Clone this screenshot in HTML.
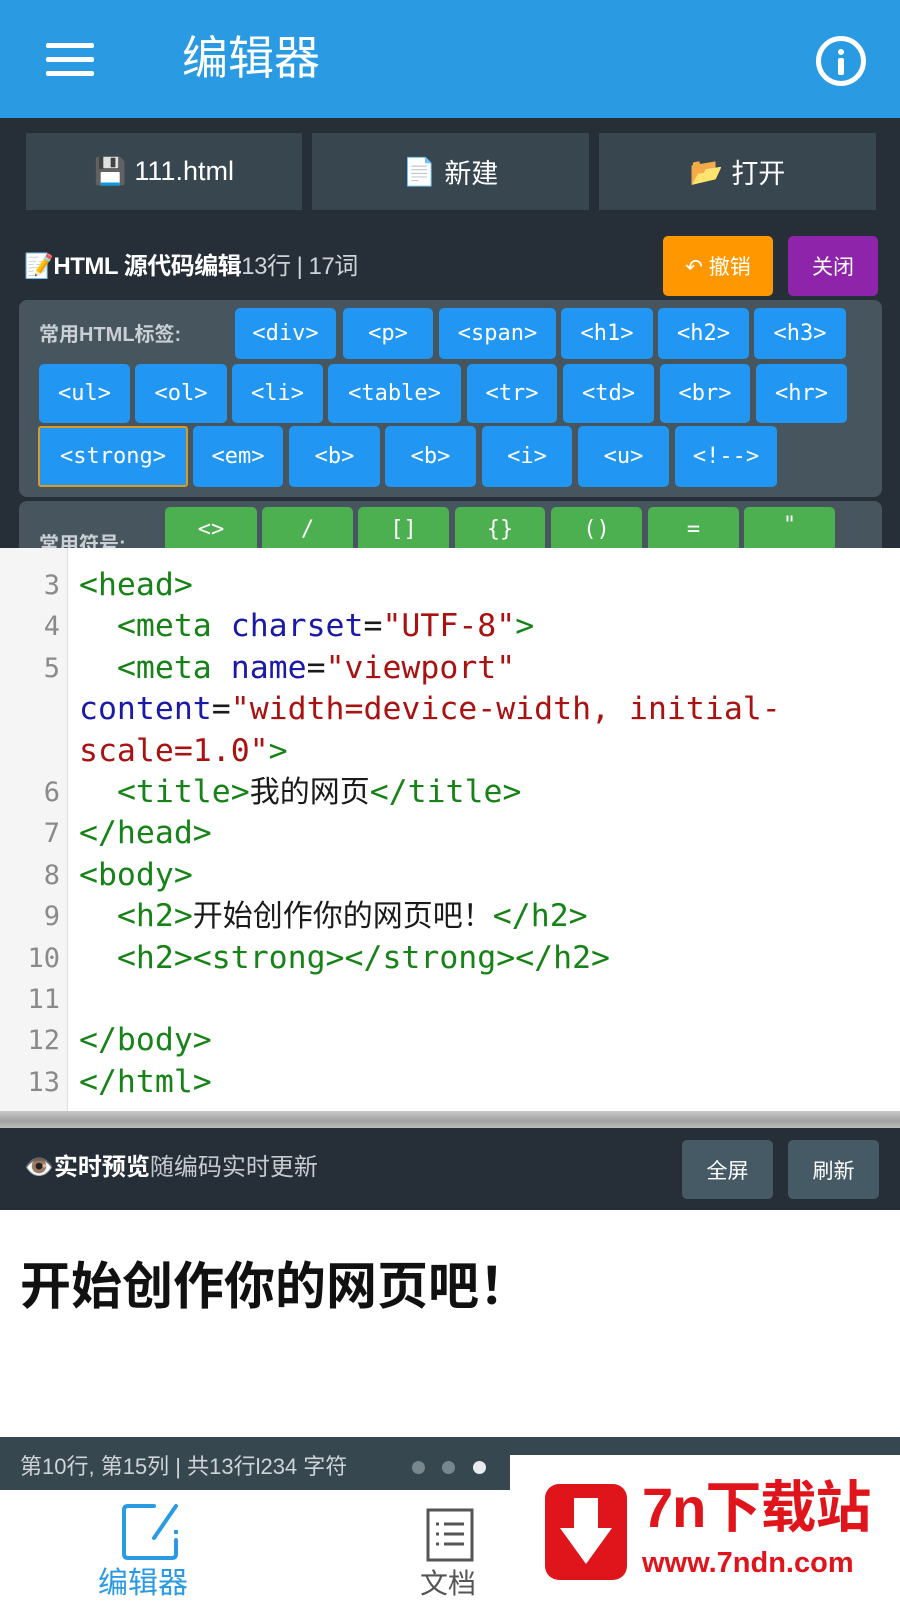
<!DOCTYPE html>
<html><head><meta charset="utf-8"><style>
*{margin:0;padding:0;box-sizing:border-box}
body{width:900px;height:1600px;overflow:hidden;position:relative;background:#fff;font-family:"Liberation Sans","Noto Sans CJK SC",sans-serif}
.a{position:absolute}
.hdr{left:0;top:0;width:900px;height:118px;background:#2a9be2}
.dark{left:0;top:118px;width:900px;height:430px;background:#262e37}
.tb{top:133px;height:77px;background:#37464f;color:#fff;font-size:27px;display:flex;align-items:center;justify-content:center;gap:8px}
.panel{background:#47555e;border-radius:8px}
.btn{position:absolute;border-radius:5px;color:#fff;font-family:"DejaVu Sans Mono",monospace;font-size:22px;display:flex;align-items:center;justify-content:center}
.bl{background:#2196f3}
.gr{background:#4caf50}
.lbl{color:#c9cfd3;font-size:20px;font-weight:bold}
.code{font-family:"DejaVu Sans Mono","Noto Sans CJK SC",monospace;font-size:31.5px;line-height:41.4px;white-space:pre;color:#1a1a1a}
.t{color:#178217}.n{color:#1a1aa6}.s{color:#a11}
.ln{position:absolute;right:8px;color:#8a8a8a;font-family:"DejaVu Sans Mono",monospace;font-size:27px}
</style></head><body>
<div class="a hdr"></div>
<div class="a" style="left:46px;top:43px;width:48px;height:5px;background:#fff;border-radius:2px"></div>
<div class="a" style="left:46px;top:57px;width:48px;height:5px;background:#fff;border-radius:2px"></div>
<div class="a" style="left:46px;top:71px;width:48px;height:5px;background:#fff;border-radius:2px"></div>
<div class="a" style="left:182px;top:30px;color:#fff;font-size:46px;line-height:56px">编辑器</div>
<div class="a" style="left:816px;top:36px;width:50px;height:50px;border:5px solid #fff;border-radius:50%"></div>
<div class="a" style="left:838px;top:49px;width:6px;height:6px;background:#fff;border-radius:50%"></div>
<div class="a" style="left:838px;top:58px;width:6px;height:17px;background:#fff;border-radius:2px"></div>

<div class="a dark"></div>
<div class="a tb" style="left:26px;width:276px"><span style="font-size:26px">💾</span>111.html</div>
<div class="a tb" style="left:312px;width:277px"><span>📄</span>新建</div>
<div class="a tb" style="left:599px;width:277px"><span>📂</span>打开</div>

<div class="a" style="left:24px;top:249px;font-size:24px;color:#fff;font-weight:bold;line-height:36px;letter-spacing:-0.5px">📝HTML 源代码编辑<span style="font-weight:normal;color:#d0d4d8">13行 | 17词</span></div>
<div class="a" style="left:663px;top:236px;width:110px;height:60px;background:#ff9800;border-radius:5px;color:#fff;font-size:21px;display:flex;align-items:center;justify-content:center">↶ 撤销</div>
<div class="a" style="left:788px;top:236px;width:90px;height:60px;background:#8e24aa;border-radius:5px;color:#fff;font-size:21px;display:flex;align-items:center;justify-content:center">关闭</div>

<div class="a panel" style="left:19px;top:300px;width:863px;height:197px"></div>
<div class="a lbl" style="left:39px;top:318px">常用HTML标签:</div>
<div class="btn bl" style="left:235px;top:308px;width:101px;height:51px">&lt;div&gt;</div>
<div class="btn bl" style="left:343px;top:308px;width:90px;height:51px">&lt;p&gt;</div>
<div class="btn bl" style="left:439px;top:308px;width:117px;height:51px">&lt;span&gt;</div>
<div class="btn bl" style="left:561px;top:308px;width:92px;height:51px">&lt;h1&gt;</div>
<div class="btn bl" style="left:658px;top:308px;width:91px;height:51px">&lt;h2&gt;</div>
<div class="btn bl" style="left:754px;top:308px;width:92px;height:51px">&lt;h3&gt;</div>

<div class="btn bl" style="left:39px;top:364px;width:91px;height:59px">&lt;ul&gt;</div>
<div class="btn bl" style="left:135px;top:364px;width:92px;height:59px">&lt;ol&gt;</div>
<div class="btn bl" style="left:232px;top:364px;width:91px;height:59px">&lt;li&gt;</div>
<div class="btn bl" style="left:328px;top:364px;width:133px;height:59px">&lt;table&gt;</div>
<div class="btn bl" style="left:467px;top:364px;width:90px;height:59px">&lt;tr&gt;</div>
<div class="btn bl" style="left:563px;top:364px;width:91px;height:59px">&lt;td&gt;</div>
<div class="btn bl" style="left:660px;top:364px;width:90px;height:59px">&lt;br&gt;</div>
<div class="btn bl" style="left:756px;top:364px;width:91px;height:59px">&lt;hr&gt;</div>

<div class="btn bl" style="left:38px;top:426px;width:150px;height:61px;border:2px solid #d99a2a;border-radius:3px">&lt;strong&gt;</div>
<div class="btn bl" style="left:193px;top:426px;width:90px;height:61px">&lt;em&gt;</div>
<div class="btn bl" style="left:289px;top:426px;width:91px;height:61px">&lt;b&gt;</div>
<div class="btn bl" style="left:385px;top:426px;width:91px;height:61px">&lt;b&gt;</div>
<div class="btn bl" style="left:482px;top:426px;width:90px;height:61px">&lt;i&gt;</div>
<div class="btn bl" style="left:578px;top:426px;width:91px;height:61px">&lt;u&gt;</div>
<div class="btn bl" style="left:675px;top:426px;width:102px;height:61px">&lt;!--&gt;</div>

<div class="a panel" style="left:19px;top:501px;width:863px;height:60px"></div>
<div class="a lbl" style="left:39px;top:528px">常用符号:</div>
<div class="btn gr" style="left:165px;top:507px;width:92px;height:60px;align-items:flex-start;padding-top:10px">&lt;&gt;</div>
<div class="btn gr" style="left:262px;top:507px;width:91px;height:60px;align-items:flex-start;padding-top:10px">/</div>
<div class="btn gr" style="left:358px;top:507px;width:91px;height:60px;align-items:flex-start;padding-top:10px">[]</div>
<div class="btn gr" style="left:455px;top:507px;width:90px;height:60px;align-items:flex-start;padding-top:10px">{}</div>
<div class="btn gr" style="left:551px;top:507px;width:91px;height:60px;align-items:flex-start;padding-top:10px">()</div>
<div class="btn gr" style="left:648px;top:507px;width:91px;height:60px;align-items:flex-start;padding-top:10px">=</div>
<div class="btn gr" style="left:744px;top:507px;width:91px;height:60px;align-items:flex-start;padding-top:6px">"</div>

<!-- editor -->
<div class="a" style="left:0;top:548px;width:900px;height:564px;background:#fff;overflow:hidden">
 <div class="a" style="left:0;top:0;width:68px;height:564px;background:#f5f5f5;border-right:1px solid #ddd"></div>
 <div class="a" style="left:0;top:17px;width:68px">
  <div class="ln" style="top:0;line-height:41.4px">3</div>
  <div class="ln" style="top:41.4px;line-height:41.4px">4</div>
  <div class="ln" style="top:82.8px;line-height:41.4px">5</div>
  <div class="ln" style="top:207px;line-height:41.4px">6</div>
  <div class="ln" style="top:248.4px;line-height:41.4px">7</div>
  <div class="ln" style="top:289.8px;line-height:41.4px">8</div>
  <div class="ln" style="top:331.2px;line-height:41.4px">9</div>
  <div class="ln" style="top:372.6px;line-height:41.4px">10</div>
  <div class="ln" style="top:414px;line-height:41.4px">11</div>
  <div class="ln" style="top:455.4px;line-height:41.4px">12</div>
  <div class="ln" style="top:496.8px;line-height:41.4px">13</div>
 </div>
 <div class="a code" style="left:79px;top:17px"><span class="t">&lt;head&gt;</span>
  <span class="t">&lt;meta</span> <span class="n">charset</span>=<span class="s">"UTF-8"</span><span class="t">&gt;</span>
  <span class="t">&lt;meta</span> <span class="n">name</span>=<span class="s">"viewport"</span>
<span class="n">content</span>=<span class="s">"width=device-width, initial-</span>
<span class="s">scale=1.0"</span><span class="t">&gt;</span>
  <span class="t">&lt;title&gt;</span><span style="font-size:30px">我的网页</span><span class="t">&lt;/title&gt;</span>
<span class="t">&lt;/head&gt;</span>
<span class="t">&lt;body&gt;</span>
  <span class="t">&lt;h2&gt;</span><span style="font-size:30px">开始创作你的网页吧！</span><span class="t">&lt;/h2&gt;</span>
  <span class="t">&lt;h2&gt;&lt;strong&gt;&lt;/strong&gt;&lt;/h2&gt;</span>

<span class="t">&lt;/body&gt;</span>
<span class="t">&lt;/html&gt;</span></div>
</div>
<div class="a" style="left:0;top:1111px;width:900px;height:17px;background:linear-gradient(#c8c8c8,#a0a0a0 60%,#bcbcbc)"></div>

<div class="a" style="left:0;top:1128px;width:900px;height:82px;background:#262e37"></div>
<div class="a" style="left:24px;top:1150px;font-size:24px;color:#fff;font-weight:bold;line-height:36px">👁️实时预览<span style="font-weight:normal;color:#c5cace">随编码实时更新</span></div>
<div class="a" style="left:682px;top:1140px;width:91px;height:59px;background:#455a64;border-radius:5px;color:#fff;font-size:21px;display:flex;align-items:center;justify-content:center">全屏</div>
<div class="a" style="left:788px;top:1140px;width:91px;height:59px;background:#455a64;border-radius:5px;color:#fff;font-size:21px;display:flex;align-items:center;justify-content:center">刷新</div>

<div class="a" style="left:20px;top:1256px;font-size:51px;font-weight:bold;color:#111;line-height:62px">开始创作你的网页吧！</div>

<div class="a" style="left:0;top:1437px;width:900px;height:53px;background:#37474f"></div>
<div class="a" style="left:20px;top:1449px;color:#cfd4d7;font-size:22px">第10行, 第15列 | 共13行l234 字符</div>
<div class="a" style="left:412px;top:1461px;width:13px;height:13px;border-radius:50%;background:#78868d"></div>
<div class="a" style="left:442px;top:1461px;width:13px;height:13px;border-radius:50%;background:#78868d"></div>
<div class="a" style="left:473px;top:1461px;width:13px;height:13px;border-radius:50%;background:#e8ecee"></div>

<div class="a" style="left:0;top:1490px;width:900px;height:110px;background:#fff"></div>
<svg class="a" style="left:120px;top:1502px" width="62" height="58" viewBox="0 0 62 58"><path d="M34 4H8Q4 4 4 8v44q0 4 4 4h44q4 0 4-4V38" fill="none" stroke="#2a9be2" stroke-width="4" stroke-linecap="round"/><path d="M56 4L34 36" stroke="#2a9be2" stroke-width="4" stroke-linecap="round"/><path d="M56 28v4" stroke="#2a9be2" stroke-width="4"/></svg>
<div class="a" style="left:98px;top:1558px;color:#2a9be2;font-size:30px">编辑器</div>
<svg class="a" style="left:426px;top:1508px" width="50" height="54" viewBox="0 0 50 54"><rect x="2" y="2" width="44" height="50" fill="none" stroke="#555" stroke-width="3"/><g stroke="#555" stroke-width="3"><path d="M10 16h3M18 16h20M10 26h3M18 26h20M10 36h3M18 36h20"/></g></svg>
<div class="a" style="left:420px;top:1562px;color:#555;font-size:28px">文档</div>

<div class="a" style="left:510px;top:1455px;width:390px;height:145px;background:#fff"></div>
<div class="a" style="left:545px;top:1484px;width:82px;height:96px;background:#e0141b;border-radius:14px"></div>
<svg class="a" style="left:556px;top:1494px" width="60" height="76" viewBox="0 0 60 76"><path d="M18 4h24v30h14L30 70 4 34h14z" fill="#fff"/></svg>
<div class="a" style="left:642px;top:1476px;color:#e0141b;font-size:56px;line-height:64px;font-weight:bold;letter-spacing:-1px">7n下载站</div>
<div class="a" style="left:642px;top:1545px;color:#e0141b;font-size:29px;font-weight:bold;line-height:36px">www.7ndn.com</div>
</body></html>
